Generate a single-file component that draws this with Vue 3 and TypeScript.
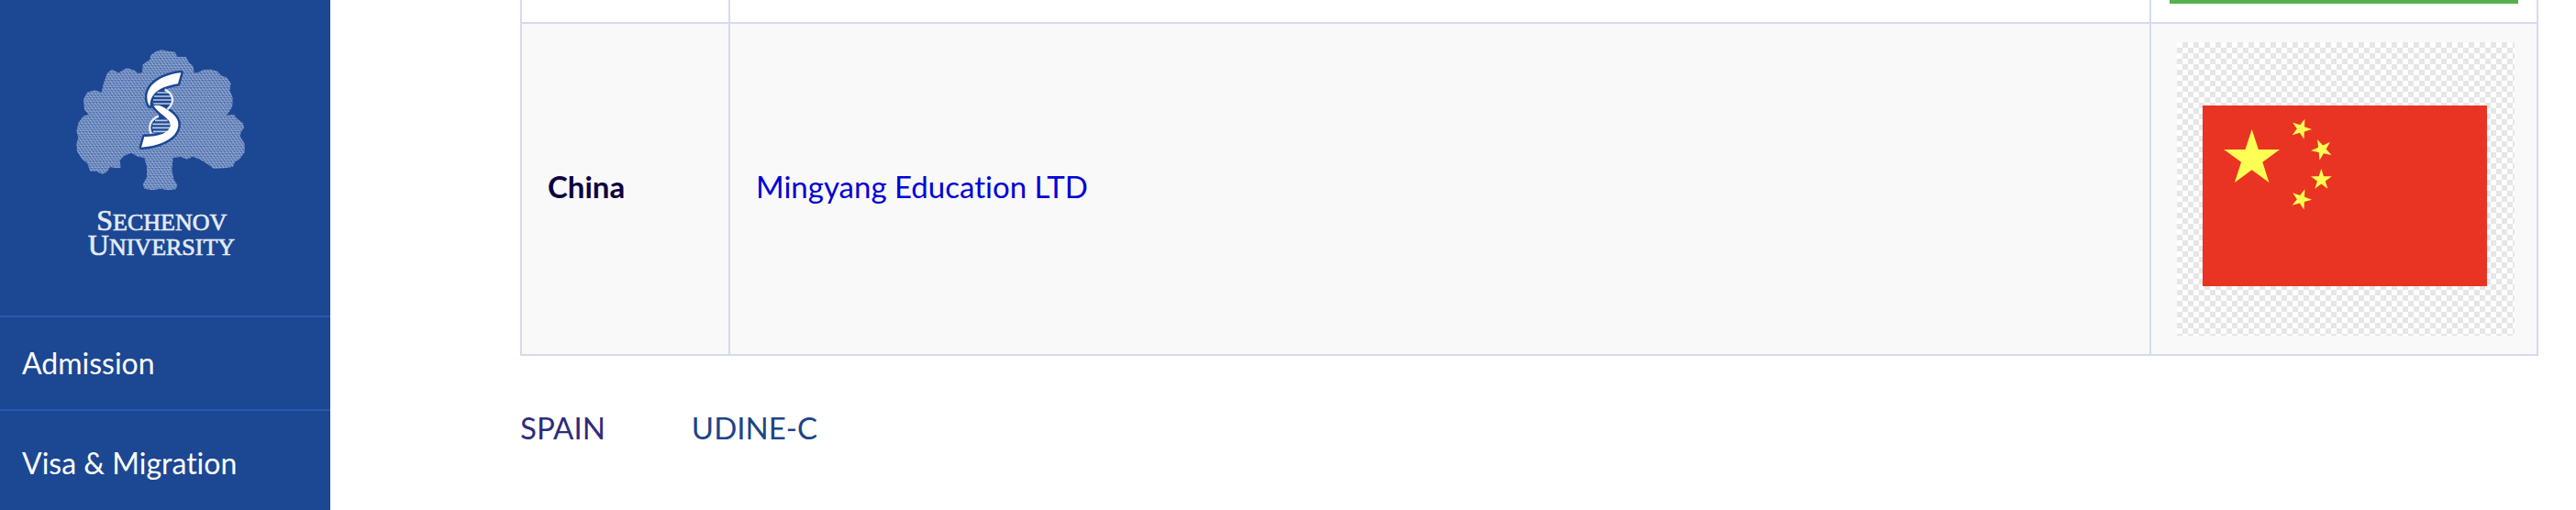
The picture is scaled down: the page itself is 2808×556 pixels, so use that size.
<script setup lang="ts">
interface Star {
  x: number
  y: number
  r: number
  turn: number
}

const navItems: string[] = ['Admission', 'Visa & Migration']
const partners: string[] = ['SPAIN', 'UDINE-C']

const stars: Star[] = [
  { x: 404, y: 519, r: 96, turn: 0 },
  { x: 565, y: 422, r: 35, turn: 20 },
  { x: 633, y: 489, r: 36, turn: -24 },
  { x: 631, y: 588, r: 36, turn: 0 },
  { x: 565, y: 652, r: 35, turn: 20 },
]

function starPoints(s: Star): string {
  const out: string[] = []
  for (let i = 0; i < 10; i++) {
    const r = i % 2 === 0 ? s.r : s.r * 0.382
    const a = ((i * 36 + s.turn - 90) * Math.PI) / 180
    out.push(`${(s.x + r * Math.cos(a)).toFixed(1)},${(s.y + r * Math.sin(a)).toFixed(1)}`)
  }
  return out.join(' ')
}
</script>

<template>
  <div class="page">
    <aside class="sidebar">
      <a class="logo" href="#" aria-label="Sechenov University">
        <svg viewBox="240 150 600 684" role="img" aria-hidden="true">
          <defs>
            <pattern id="mesh" width="11" height="16" patternUnits="userSpaceOnUse">
              <rect width="11" height="16" fill="#4b6dad" />
              <path d="M2 2L8 5M-3 10L3 13M8 10L14 13" stroke="#a3b6d9" stroke-width="3.8" stroke-linecap="round" />
            </pattern>
          </defs>
          <path
            fill="url(#mesh)"
            d="M465 236L467 210L490 195L493 180L510 168L528 163L550 167L572 170L580 186L608 186L618 205L631 215L635 238L650 236L665 228L690 227L712 233L722 246L742 254L755 272L751 295L761 320L760 348L748 368L740 378L765 374L775 388L795 403L798 418L788 432L785 446L800 470L800 498L784 520L768 530L762 545L735 550L700 552L680 538L655 522L630 512L610 521L592 513L566 516L562 555L568 585L580 605L575 619L550 622L525 617L500 622L472 617L467 604L480 580L480 545L472 516L450 512L430 500L405 510L392 525L395 548L380 550L360 546L350 562L335 570L315 560L295 560L286 535L268 520L252 495L250 470L256 450L250 430L257 400L272 380L290 374L276 360L273 325L285 302L310 295L332 302L338 275L350 240L365 227L388 238L415 222L440 230L452 240Z"
          />
          <g fill="#1c4793" stroke="#1c4793" stroke-width="15" stroke-linejoin="round">
            <path d="M592 238C545 242 480 268 481 320Q482 340 491 347C490 315 510 285 582 274Z" />
            <path d="M502 346Q524 340 545 358C575 375 585 395 583 412C578 455 520 478 462 482L472 447C520 447 555 435 557 408C555 386 525 378 502 346Z" />
            <path d="M504 302L542 295L562 325L548 355L502 346ZM520 380L497 396L492 430L550 436L556 405Z" stroke-width="6" />
          </g>
          <g stroke="#bdcbe5" stroke-width="5">
            <path d="M514 303H549M504 315H560M501 327H563M502 339H558M507 394H548M499 406H556M498 418H555M501 430H547" />
          </g>
          <g fill="none" stroke="#e7edf7" stroke-width="7">
            <path d="M539 293C571 309 571 337 547 358" />
            <path d="M519 380C490 391 484 417 495 437" />
          </g>
          <g fill="#fff">
            <path d="M592 238C545 242 480 268 481 320Q482 340 491 347C490 315 510 285 582 274Z" />
            <path d="M502 346Q524 340 545 358C575 375 585 395 583 412C578 455 520 478 462 482L472 447C520 447 555 435 557 408C555 386 525 378 502 346Z" />
          </g>
          <g class="logo-name" text-anchor="middle">
            <text x="529" y="752">S<tspan class="small-caps">ECHENOV</tspan></text>
            <text x="528" y="835">U<tspan class="small-caps">NIVERSITY</tspan></text>
          </g>
        </svg>
      </a>
      <nav>
        <a v-for="item in navItems" :key="item" class="nav-link" href="#">{{ item }}</a>
      </nav>
    </aside>

    <main class="content">
      <table>
        <colgroup>
          <col class="col-country" />
          <col />
          <col class="col-flag" />
        </colgroup>
        <tbody>
          <tr class="row-previous">
            <td></td>
            <td></td>
            <td><div class="flag-edge"></div></td>
          </tr>
          <tr class="row-china">
            <th scope="row">China</th>
            <td><a href="#">Mingyang Education LTD</a></td>
            <td class="flag-cell">
              <svg class="flag" viewBox="159 138 1104 960" role="img" aria-label="Flag of China">
                <defs>
                  <pattern id="checks" x="159" y="138" width="36" height="36" patternUnits="userSpaceOnUse">
                    <rect width="36" height="36" fill="#fff" />
                    <path d="M18 0H36V18H18ZM0 18H18V36H0Z" fill="#e6e6e6" />
                  </pattern>
                </defs>
                <rect x="159" y="138" width="1104" height="960" fill="url(#checks)" />
                <rect x="243" y="345" width="930" height="591" fill="#e93423" />
                <polygon v-for="(s, i) in stars" :key="i" :points="starPoints(s)" fill="#ffff54" />
              </svg>
            </td>
          </tr>
        </tbody>
      </table>
      <div class="partners">
        <a v-for="p in partners" :key="p" href="#">{{ p }}</a>
      </div>
    </main>
  </div>
</template>

<style>
body {
  margin: 0;
  background: #fff;
}
</style>

<style scoped>
.page {
  display: flex;
  min-height: 100vh;
  font-family: Lato, "Open Sans", sans-serif;
  font-variant-ligatures: none;
}

a {
  text-decoration: none;
}

.sidebar {
  flex: 0 0 360px;
  background: #1c4793;
}

.logo {
  display: flex;
  justify-content: center;
  padding: 50px 0 66px;
}

.logo svg {
  display: block;
  width: 200px;
  overflow: visible;
}

.logo-name {
  font-family: "Liberation Serif", serif;
  font-size: 96px;
  fill: #e3ebf8;
  stroke: #e3ebf8;
  stroke-width: 2px;
}

.small-caps {
  font-size: 78px;
}

.nav-link {
  display: block;
  padding: 30px 24px;
  border-top: 2px solid #2758b4;
  color: #fff;
  font-size: 32px;
  line-height: 40px;
}

.nav-link + .nav-link {
  padding-top: 37px;
  padding-bottom: 27px;
}

.content {
  flex: 1;
  min-width: 0;
  padding: 0 41px 0 207px;
}

table {
  width: 100%;
  table-layout: fixed;
  border-collapse: collapse;
  font-size: 33px;
  line-height: 40px;
}

.col-country {
  width: 227px;
}

.col-flag {
  width: 422px;
}

th,
td {
  padding: 20px 28px 26px;
  border: 2px solid #d5dbec;
  text-align: left;
  vertical-align: middle;
}

th {
  color: #0d0040;
  font-weight: 700;
}

td a {
  color: #0000d6;
}

.row-previous td {
  padding: 0 20px 20px;
  border-top: 0;
}

.flag-edge {
  height: 4px;
  background: #56b04d;
}

.row-china {
  background: #f9f9f9;
}

.flag-cell {
  padding: 20px 24px 20px 28px;
}

.flag {
  display: block;
  width: 100%;
}

.partners {
  display: flex;
  gap: 94px;
  padding-top: 58px;
  font-size: 33px;
  line-height: 40px;
}

.partners a {
  color: #2d2c7c;
}

.partners a + a {
  color: #1c4587;
}
</style>
